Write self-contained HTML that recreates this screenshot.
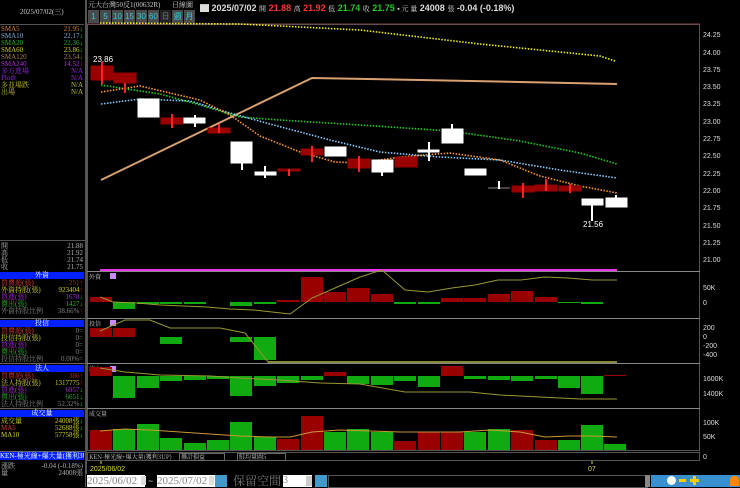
<!DOCTYPE html>
<html><head><meta charset="utf-8"><style>
body{margin:0;width:740px;height:487px;background:#000;overflow:hidden;position:relative;font-family:"Liberation Sans","Noto Sans CJK TC",sans-serif;}
.a{position:absolute;white-space:nowrap;}
.s{font-family:"Liberation Serif","Noto Serif CJK SC",serif;font-size:7px;line-height:7px;}
.hd{position:absolute;left:0;width:84px;height:7px;background:#0020ff;color:#fff;text-align:center;font-size:7px;line-height:7px;font-family:"Liberation Serif","Noto Serif CJK SC",serif;}
.row{position:absolute;left:1px;width:82px;height:7px;font-size:7px;line-height:7px;font-family:"Liberation Serif","Noto Serif CJK SC",serif;opacity:.85}
.row span{position:absolute;right:0;}
.btn{position:absolute;top:10px;height:13px;width:11px;background:#4a4a4a;color:#3cd;font-size:8px;line-height:13px;text-align:center;}
</style></head><body>
<div class="a" style="left:0;top:0;width:84px;height:24px;border-bottom:1px solid #555;"></div>
<div class="a s" style="left:20px;top:9px;color:#ccc;">2025/07/02(三)</div>
<div class="a" style="left:85px;top:0;width:2px;height:487px;background:#555;"></div>
<div class="row" style="top:26px;color:#f93">SMA5<span>21.95<b style="color:#0f0">↓</b></span></div>
<div class="row" style="top:33px;color:#8cf">SMA10<span>22.17<b style="color:#0f0">↓</b></span></div>
<div class="row" style="top:40px;color:#3c3">SMA20<span>22.36<b style="color:#0f0">↓</b></span></div>
<div class="row" style="top:47px;color:#ee3">SMA60<span>23.86<b style="color:#0f0">↓</b></span></div>
<div class="row" style="top:54px;color:#c96">SMA120<span>23.54<b style="color:#0f0">↓</b></span></div>
<div class="row" style="top:61px;color:#c3f">SMA240<span>14.52<b style="color:#f00">↑</b></span></div>
<div class="row" style="top:68px;color:#a3f">多方進場<span>N/A</span></div>
<div class="row" style="top:75px;color:#a3f">Plot8<span>N/A</span></div>
<div class="row" style="top:82px;color:#dd3">多並場跌<span>N/A</span></div>
<div class="row" style="top:89px;color:#dd3">出場<span>N/A</span></div>
<div class="a" style="left:0;top:240px;width:85px;height:1px;background:#555"></div>
<div class="row" style="top:243px;color:#ccc">開<span>21.88</span></div>
<div class="row" style="top:250px;color:#ccc">高<span>21.92</span></div>
<div class="row" style="top:257px;color:#ccc">低<span>21.74</span></div>
<div class="row" style="top:264px;color:#ccc">收<span>21.75</span></div>
<div class="hd" style="top:272px">外資</div>
<div class="row" style="top:280px;color:#f44">買賣超(張)<span style="color:#c33">251<b>↑</b></span></div>
<div class="row" style="top:287px;color:#ee3">外資持股(張)<span>923404<b style="color:#f00">↑</b></span></div>
<div class="row" style="top:294px;color:#c3f">買進(張)<span>1678<b style="color:#0f0">↓</b></span></div>
<div class="row" style="top:301px;color:#3c3">賣出(張)<span>1427<b style="color:#0f0">↓</b></span></div>
<div class="row" style="top:308px;color:#999">外資持股比例<span>38.66%<b style="color:#f00">↑</b></span></div>
<div class="a" style="left:0;top:318px;width:85px;height:1px;background:#666"></div>
<div class="hd" style="top:320px">投信</div>
<div class="row" style="top:328px;color:#f44">買賣超(張)<span style="color:#999">0=</span></div>
<div class="row" style="top:335px;color:#ee3">投信持股(張)<span style="color:#999">0=</span></div>
<div class="row" style="top:342px;color:#c3f">買進(張)<span style="color:#999">0=</span></div>
<div class="row" style="top:349px;color:#3c3">賣出(張)<span style="color:#999">0=</span></div>
<div class="row" style="top:356px;color:#999">投信持股比例<span>0.00%=</span></div>
<div class="a" style="left:0;top:363px;width:85px;height:1px;background:#666"></div>
<div class="hd" style="top:365px">法人</div>
<div class="row" style="top:373px;color:#f44">買賣超(張)<span style="color:#c33">386<b>↑</b></span></div>
<div class="row" style="top:380px;color:#ee3">法人持股(張)<span>1317775<b style="color:#f00">↑</b></span></div>
<div class="row" style="top:387px;color:#c3f">買進(張)<span>6957<b style="color:#0f0">↓</b></span></div>
<div class="row" style="top:394px;color:#3c3">賣出(張)<span>6651<b style="color:#0f0">↓</b></span></div>
<div class="row" style="top:401px;color:#999">法人持股比例<span>52.32%<b style="color:#0f0">↓</b></span></div>
<div class="a" style="left:0;top:408px;width:85px;height:1px;background:#666"></div>
<div class="hd" style="top:410px">成交量</div>
<div class="row" style="top:418px;color:#ee3">成交量<span>24008張<b style="color:#0f0">↓</b></span></div>
<div class="row" style="top:425px;color:#f44">MA5<span style="color:#ee3">52688張<b style="color:#0f0">↓</b></span></div>
<div class="row" style="top:432px;color:#ee3">MA10<span>57758張<b style="color:#0f0">↓</b></span></div>
<div class="a" style="left:0;top:451px;width:85px;height:1px;background:#666"></div>
<div class="a s" style="left:0;top:452px;width:84px;height:8px;background:#0020ff;color:#fff;line-height:8px;overflow:hidden">KEN-極光線+爆大量(獲利3UP)</div>
<div class="row" style="top:463px;color:#ccc">漲跌<span>-0.04 (-0.18%)</span></div>
<div class="row" style="top:470px;color:#ccc">量<span>24008張</span></div>

<div class="a s" style="left:88px;top:2px;color:#ccc;font-size:7px">元大台灣50反1(00632R)</div>
<div class="a s" style="left:172px;top:2px;color:#ccc;font-size:7px">日線圖</div>
<div class="a" style="left:200px;top:1px;font-size:9px;color:#ddd;font-weight:bold">▇ 2025/07/02 <span class="s" style="font-weight:normal">開</span> <span style="color:#f33">21.88</span> <span class="s" style="font-weight:normal">高</span> <span style="color:#f33">21.92</span> <span class="s" style="font-weight:normal">低</span> <span style="color:#2c2">21.74</span> <span class="s" style="font-weight:normal">收</span> <span style="color:#2c2">21.75</span> <span class="s" style="font-weight:normal">▪ 元 量</span> 24008 <span class="s" style="font-weight:normal">張</span> -0.04 (-0.18%)</div>
<div class="btn" style="left:88px">1</div><div class="btn" style="left:100px">5</div><div class="btn" style="left:112px">10</div><div class="btn" style="left:124px">15</div><div class="btn" style="left:136px">30</div><div class="btn" style="left:148px">60</div><div class="btn" style="left:160px;background:#222;color:#777">日</div><div class="btn" style="left:172px">週</div><div class="btn" style="left:184px">月</div>

<svg class="a" style="left:0;top:0" width="740" height="487">
<g fill="none">
<rect x="87.5" y="24.5" width="612" height="426" stroke="#555"/>
<line x1="87" y1="24" x2="700" y2="24" stroke="#744"/>
<line x1="87" y1="271.5" x2="700" y2="271.5" stroke="#888"/>
<line x1="87" y1="318.5" x2="700" y2="318.5" stroke="#888"/>
<line x1="87" y1="363.5" x2="700" y2="363.5" stroke="#888"/>
<line x1="87" y1="408.5" x2="700" y2="408.5" stroke="#888"/>
<line x1="100" y1="270" x2="617" y2="270" stroke="#e3e" stroke-width="2"/>
<polyline points="100,23 240,24 360,30 480,44 560,52 600,56 615,61" stroke="#ee2" stroke-width="1.6" stroke-dasharray="1.5,1.5"/>
<polyline points="101,180 312,78 420,80 520,82 617,84" stroke="#d9a070" stroke-width="2"/>
<polyline points="101,85 160,94 200,105 240,117 280,120 360,125 450,131 520,141 580,153 617,164" stroke="#2c2" stroke-width="1.6" stroke-dasharray="1.5,1.5"/>
<polyline points="101,104 140,99 190,101 230,113 270,124 330,140 380,152 440,157 500,160 560,170 617,178" stroke="#8cf" stroke-width="1.6" stroke-dasharray="1.5,1.5"/>
<polyline points="101,92 140,86 200,100 230,115 260,136 300,152 335,162 360,163 400,157 450,153 500,160 540,176 580,186 617,193" stroke="#f93" stroke-width="1.6" stroke-dasharray="1.5,1.5"/>
</g>
<g fill="#900" stroke="#900">
<rect x="91" y="66" width="22" height="14" /><line x1="102" y1="62" x2="102" y2="84" stroke="#f22" stroke-width="2"/>
<rect x="114" y="73" width="22" height="10"/><line x1="125" y1="83" x2="125" y2="93" stroke="#f22" stroke-width="2"/>
<rect x="161" y="118" width="22" height="6"/><line x1="172" y1="114" x2="172" y2="128" stroke="#f22" stroke-width="2"/>
<rect x="208" y="128" width="22" height="5"/><line x1="219" y1="124" x2="219" y2="133" stroke="#f22" stroke-width="2"/>
<rect x="278" y="169" width="22" height="2"/><line x1="289" y1="169" x2="289" y2="176" stroke="#f22" stroke-width="2"/>
<rect x="301" y="149" width="22" height="6"/><line x1="312" y1="146" x2="312" y2="162" stroke="#f22" stroke-width="2"/>
<rect x="348" y="159" width="22" height="9"/><line x1="359" y1="156" x2="359" y2="172" stroke="#f22" stroke-width="2"/>
<rect x="395" y="157" width="22" height="10"/>
<rect x="512" y="186" width="22" height="6"/><line x1="523" y1="183" x2="523" y2="198" stroke="#f22" stroke-width="2"/>
<rect x="535" y="185" width="22" height="6"/><line x1="546" y1="179" x2="546" y2="191" stroke="#f22" stroke-width="2"/>
<rect x="559" y="186" width="22" height="5"/><line x1="570" y1="184" x2="570" y2="193" stroke="#f22" stroke-width="2"/>
</g>
<g fill="#fff" stroke="#fff">
<rect x="138" y="99" width="21" height="18"/>
<rect x="184" y="118" width="21" height="5"/><line x1="195" y1="115" x2="195" y2="127" stroke-width="2"/>
<rect x="231" y="142" width="21" height="21"/><line x1="242" y1="163" x2="242" y2="170" stroke-width="2"/>
<rect x="255" y="172" width="21" height="3"/><line x1="265" y1="166" x2="265" y2="178" stroke-width="2"/>
<rect x="325" y="147" width="21" height="9"/>
<rect x="372" y="160" width="21" height="12"/><line x1="382" y1="172" x2="382" y2="176" stroke-width="2"/>
<rect x="418" y="150" width="21" height="2"/><line x1="429" y1="142" x2="429" y2="161" stroke-width="2"/>
<rect x="442" y="129" width="21" height="14"/><line x1="452" y1="124" x2="452" y2="129" stroke-width="2"/>
<rect x="465" y="169" width="21" height="6"/>
<line x1="488" y1="188" x2="510" y2="188" stroke="#888"/><line x1="499" y1="181" x2="499" y2="189" stroke-width="2"/>
<rect x="582" y="199" width="21" height="6"/><line x1="592" y1="205" x2="592" y2="221" stroke-width="2"/>
<rect x="606" y="198" width="21" height="9"/><line x1="616" y1="195" x2="616" y2="198" stroke-width="2"/>
</g>
<text x="93" y="62" fill="#fff" font-size="8" font-family="Liberation Sans">23.86</text>
<text x="583" y="227" fill="#fff" font-size="8" font-family="Liberation Sans">21.56</text>
<g fill="#ddd" font-size="7" font-family="Liberation Sans">
<text x="703" y="37">24.25</text><text x="703" y="55">24.00</text><text x="703" y="72">23.75</text><text x="703" y="89">23.50</text><text x="703" y="106">23.25</text><text x="703" y="124">23.00</text><text x="703" y="141">22.75</text><text x="703" y="158">22.50</text><text x="703" y="176">22.25</text><text x="703" y="193">22.00</text><text x="703" y="210">21.75</text><text x="703" y="228">21.50</text><text x="703" y="245">21.25</text><text x="703" y="262">21.00</text>
<text x="703" y="290">50K</text><text x="703" y="305">0</text>
<text x="703" y="330">200</text><text x="703" y="339">0</text><text x="703" y="348">-200</text><text x="703" y="357">-400</text>
<text x="703" y="381">1600K</text><text x="703" y="396">1400K</text>
<text x="703" y="425">100K</text><text x="703" y="439">50K</text>
<text x="703" y="459">0</text>
</g>
<g font-size="6" fill="#ccc" font-family="Noto Serif CJK SC,serif"><text x="89" y="279">外資</text><text x="89" y="326">投信</text><text x="89" y="371">法人</text><text x="89" y="416">成交量</text></g>
<rect x="110" y="273" width="6" height="6" fill="#c8f"/><rect x="110" y="320" width="6" height="6" fill="#c8f"/><rect x="110" y="366" width="6" height="6" fill="#c8f"/>
<g fill="#900"><rect x="90" y="297" width="22" height="5"/><rect x="277" y="300" width="22" height="2"/><rect x="301" y="277" width="22" height="25"/><rect x="324" y="292" width="22" height="10"/><rect x="347" y="288" width="22" height="14"/><rect x="371" y="294" width="22" height="8"/><rect x="441" y="298" width="22" height="4"/><rect x="464" y="298" width="22" height="4"/><rect x="488" y="294" width="22" height="8"/><rect x="511" y="291" width="22" height="11"/><rect x="535" y="297" width="22" height="5"/></g>
<g fill="#1a1"><rect x="113" y="302" width="22" height="7"/><rect x="137" y="302" width="22" height="2"/><rect x="160" y="302" width="22" height="2"/><rect x="184" y="302" width="22" height="2"/><rect x="230" y="302" width="22" height="4"/><rect x="254" y="302" width="22" height="2"/><rect x="394" y="302" width="22" height="2"/><rect x="418" y="302" width="22" height="2"/><rect x="558" y="302" width="22" height="1"/><rect x="581" y="302" width="22" height="2"/></g>
<polyline fill="none" stroke="#993" points="100,297 113,302 137,303 160,305 184,306 207,307 230,309 254,310 290,314 312,298 335,288 360,277 382,270 405,290 428,292 452,288 475,285 498,280 521,280 545,277 568,278 592,280 617,280"/>
<g fill="#900"><rect x="90" y="328" width="22" height="9"/><rect x="113" y="328" width="22" height="9"/></g>
<g fill="#1a1"><rect x="160" y="337" width="22" height="7"/><rect x="230" y="337" width="22" height="5"/><rect x="254" y="337" width="22" height="23"/></g>
<polyline fill="none" stroke="#993" points="100,331 125,320 150,320 170,328 220,328 245,333 268,362 617,362"/>
<line x1="268" y1="362" x2="617" y2="362" stroke="#883" stroke-width="2"/>
<g fill="#900"><rect x="90" y="367" width="22" height="9"/><rect x="324" y="372" width="22" height="4"/><rect x="441" y="366" width="22" height="10"/><rect x="604" y="375" width="22" height="1"/></g>
<g fill="#1a1"><rect x="113" y="376" width="22" height="22"/><rect x="137" y="376" width="22" height="12"/><rect x="160" y="376" width="22" height="5"/><rect x="184" y="376" width="22" height="4"/><rect x="207" y="376" width="22" height="3"/><rect x="230" y="376" width="22" height="20"/><rect x="254" y="376" width="22" height="10"/><rect x="277" y="376" width="22" height="7"/><rect x="301" y="376" width="22" height="4"/><rect x="347" y="376" width="22" height="8"/><rect x="371" y="376" width="22" height="9"/><rect x="394" y="376" width="22" height="5"/><rect x="418" y="376" width="22" height="11"/><rect x="464" y="376" width="22" height="3"/><rect x="488" y="376" width="22" height="4"/><rect x="511" y="376" width="22" height="5"/><rect x="535" y="376" width="22" height="3"/><rect x="558" y="376" width="22" height="12"/><rect x="581" y="376" width="22" height="18"/></g>
<polyline fill="none" stroke="#993" points="100,368 125,372 160,375 210,376 240,378 280,380 320,383 360,384 405,392 428,392 470,392 500,395 540,397 580,399 617,399"/>
<g fill="#900"><rect x="90" y="430" width="22" height="20"/><rect x="277" y="439" width="22" height="11"/><rect x="301" y="416" width="22" height="34"/><rect x="394" y="441" width="22" height="9"/><rect x="418" y="432" width="22" height="18"/><rect x="441" y="432" width="22" height="18"/><rect x="511" y="430" width="22" height="20"/><rect x="535" y="440" width="22" height="10"/></g>
<g fill="#1a1"><rect x="113" y="429" width="22" height="21"/><rect x="137" y="424" width="22" height="26"/><rect x="160" y="438" width="22" height="12"/><rect x="184" y="443" width="22" height="7"/><rect x="207" y="440" width="22" height="10"/><rect x="230" y="422" width="22" height="28"/><rect x="254" y="437" width="22" height="13"/><rect x="324" y="432" width="22" height="18"/><rect x="347" y="429" width="22" height="21"/><rect x="371" y="432" width="22" height="18"/><rect x="464" y="432" width="22" height="18"/><rect x="488" y="429" width="22" height="21"/><rect x="558" y="440" width="22" height="10"/><rect x="581" y="425" width="22" height="25"/><rect x="604" y="444" width="22" height="6"/></g>
<polyline fill="none" stroke="#c93" points="100,431 125,429 150,430 180,432 210,434 240,436 270,437 290,437 312,432 340,430 370,431 400,432 430,432 460,432 490,430 520,432 545,437 570,436 592,436 617,437"/>
<rect x="87.5" y="452.5" width="612" height="8" fill="#000" stroke="#555"/>
<text x="89" y="459" fill="#ccc" font-size="6" font-family="Noto Serif CJK SC,serif">KEN-極光線+爆大量(獲利3UP)</text>
<rect x="179.5" y="453.5" width="45" height="7" fill="#000" stroke="#666"/><text x="181" y="459" fill="#ccc" font-size="6" font-family="Noto Serif CJK SC,serif">疊計損益</text>
<rect x="237.5" y="453.5" width="48" height="7" fill="#000" stroke="#666"/><text x="239" y="459" fill="#ccc" font-size="6" font-family="Noto Serif CJK SC,serif">鮭均量圖5</text>
<line x1="101" y1="461" x2="101" y2="464" stroke="#dd3"/><line x1="592" y1="461" x2="592" y2="464" stroke="#dd3"/>
<text x="90" y="471" fill="#dd3" font-size="7" font-family="Liberation Sans">2025/06/02</text>
<text x="588" y="471" fill="#dd3" font-size="7" font-family="Liberation Sans">07</text>
</svg>
<div class="a" style="left:86px;top:474px;width:654px;height:13px;background:#000"></div>
<div class="a s" style="left:87px;top:475px;width:58px;height:12px;background:#fff;color:#888;font-size:11px;line-height:12px">2025/06/02</div>
<div class="a" style="left:141px;top:476px;width:5px;height:9px;background:#ddd"></div>
<div class="a" style="left:148px;top:476px;color:#ccc;font-size:9px">~</div>
<div class="a s" style="left:157px;top:475px;width:58px;height:12px;background:#fff;color:#888;font-size:11px;line-height:12px">2025/07/02</div>
<div class="a" style="left:209px;top:476px;width:5px;height:9px;background:#ddd"></div>
<div class="a" style="left:215px;top:475px;width:12px;height:12px;background:#49c"></div>
<div class="a s" style="left:233px;top:475px;color:#777;font-size:12px;line-height:12px">保留空間</div>
<div class="a s" style="left:283px;top:475px;width:29px;height:12px;background:#fff;color:#888;font-size:10px;line-height:12px">3</div>
<div class="a" style="left:306px;top:476px;width:6px;height:10px;background:#ccc"></div>
<div class="a" style="left:315px;top:475px;width:12px;height:12px;background:#49c"></div>
<div class="a" style="left:328px;top:475px;width:318px;height:11px;border:1px solid #555;background:#000"></div>
<div class="a" style="left:645px;top:475px;width:5px;height:12px;background:#888"></div>
<div class="a" style="left:651px;top:475px;width:89px;height:12px;background:#3a8fd0"></div>
<div class="a" style="left:667px;top:476px;width:9px;height:9px;border-radius:50%;background:#fff"></div>
<div class="a" style="left:679px;top:479px;width:7px;height:3px;background:#fc0"></div>
<div class="a" style="left:690px;top:479px;width:9px;height:3px;background:#fc0"></div>
<div class="a" style="left:693px;top:476px;width:3px;height:9px;background:#fc0"></div>
<div class="a" style="left:730px;top:476px;width:9px;height:10px;background:#f80;border-radius:4px 4px 0 0"></div>
</body></html>
